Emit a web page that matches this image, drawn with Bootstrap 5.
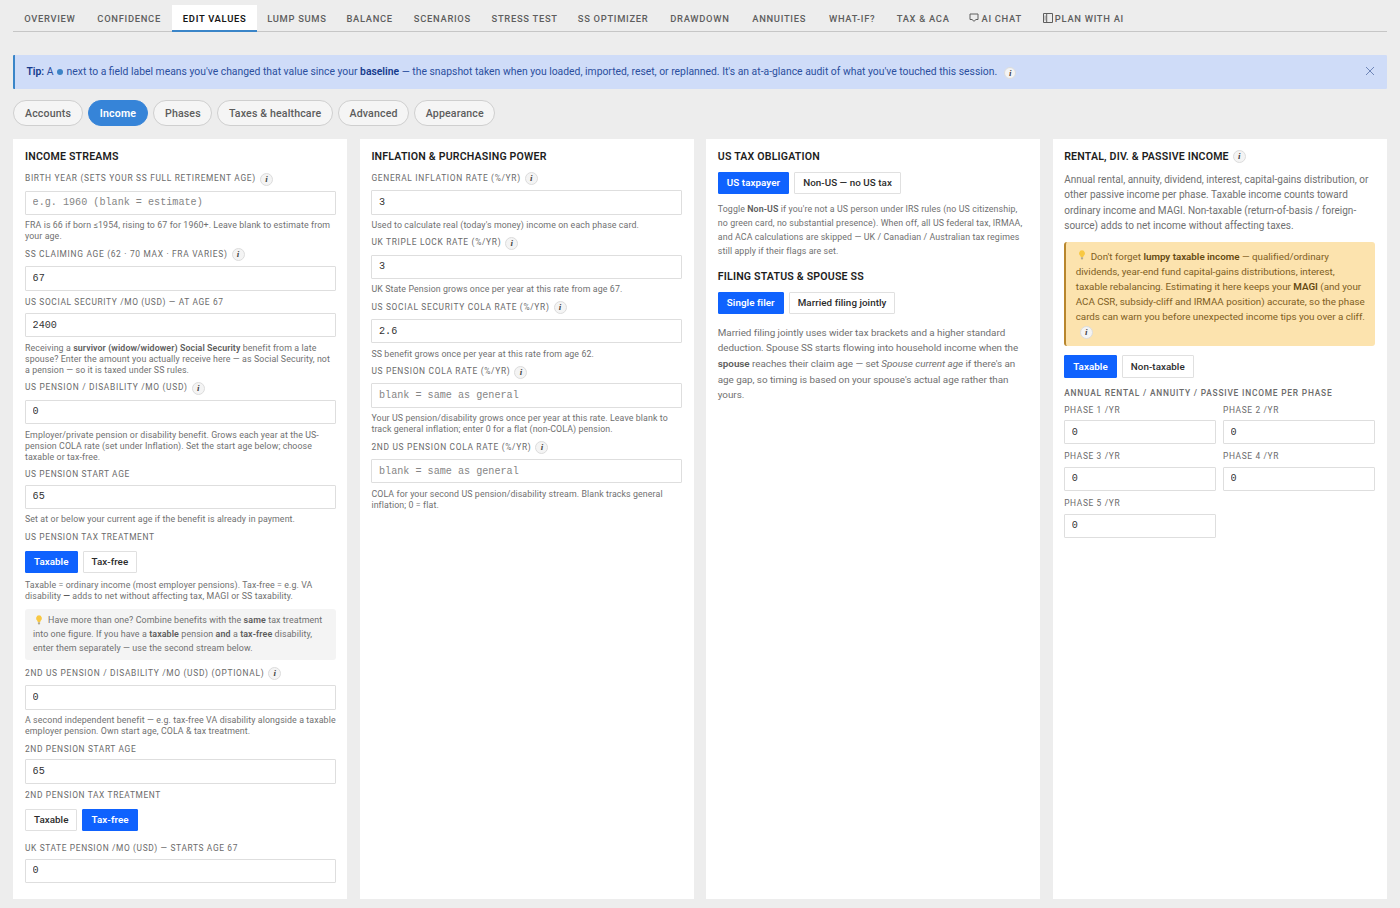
<!DOCTYPE html>
<html lang="en">
<head>
<meta charset="utf-8">
<meta name="viewport" content="width=device-width, initial-scale=1">
<title>Retirement planner – Edit values</title>
<link rel="stylesheet" href="https://cdn.jsdelivr.net/npm/bootstrap@5.3.0/dist/css/bootstrap.min.css">
<style>
  body { background: #ededed; color: #707070; font-family: Roboto, "Liberation Sans", sans-serif; font-size: 10.5px; line-height: 1.4; height: 908px; overflow: hidden; }
  b { font-weight: 600; color: #5c5c5c; }
  .page { padding: 5px 13.4px 0; }
  .tabs { display: grid; grid-template-columns: 73px 85.5px 85.5px 79px 66.5px 79px 85.5px 91.5px 82px 76.5px 69.5px 72.5px 72.5px 103px; height: 27px; border-bottom: 1px solid #c6c6c6; }
  .tabs .nav-link { padding: 1px 0 0; height: 27px; display: flex; align-items: center; justify-content: center; white-space: nowrap; color: #5e5e5e; font-size: 9.4px; font-weight: 500; letter-spacing: .7px; }
  .tabs .nav-link.active { background: #fff; color: #161616; font-weight: 600; border-bottom: 2px solid #3a85c8; padding-top: 3px; }
  .tabs svg { margin-right: 2px; margin-top: -3px; }
  .tip { height: 34px; margin-top: 23px; background: #cfdcf8; border-left: 2.5px solid #3a85c8; border-radius: 1px; color: #2b4f9e; padding: 1px 12px 0 11px; font-size: 10.36px; letter-spacing: 0; white-space: nowrap; }
  .tip b { color: #153a8c; }
  .tip .info { margin-left: 7px; width: 12px; height: 12px; line-height: 10px; }
  .dot { width: 6px; height: 6px; border-radius: 50%; background: #3d84c6; display: inline-block; margin: 0 1px; }
  .info { width: 13px; height: 13px; border-radius: 50%; border: 1px solid #dcdcdc; background: #f4f4f4; color: #444; font: italic bold 9px/11px "Liberation Serif", serif; text-align: center; letter-spacing: 0; display: inline-block; flex: none; margin-left: 4px; }
  .pills { gap: 5px; margin-top: 11px; }
  .pills .btn { height: 26px; padding: 0 10.6px; border-radius: 13px; border: 1px solid #cfcfcf; background: #f5f5f5; color: #5c5c5c; font-size: 10.6px; font-weight: 500; letter-spacing: .14px; line-height: 25px; }
  .pills .btn.active { background: #3684d8; border-color: #3684d8; color: #fff; font-weight: 600; padding: 0 11.3px; }
  .cols { display: grid; grid-template-columns: repeat(4, 334px); justify-content: space-between; margin-top: 13px; height: 760px; }
  .panel { background: #fff; padding: 10.6px 11.6px 0; white-space: nowrap; }
  .panel h2 { font-size: 10.6px; line-height: 14px; margin: 0; font-weight: 600; color: #1d1d1d; letter-spacing: .18px; display: flex; align-items: center; }
  .lbl { height: 22px; padding-top: 3px; display: flex; align-items: center; font-size: 8.4px; letter-spacing: .63px; color: #6b6b6b; }
  .lbl.tall { height: 24px; padding-top: .9px; letter-spacing: .69px; }
  .lbl.first { margin-top: 3px; }
  .rates .lbl.tall { height: 23.6px; }
  .lbl.heading { height: 20.2px; padding-top: 12.500px; font-weight: 500; letter-spacing: .79px; }
  .field.form-control { height: 24.4px; padding: 0 6.6px; border: 1px solid #dedede; border-radius: 1px; font-family: "Liberation Mono", monospace; font-size: 10.15px; color: #333; line-height: 22px; }
  .field::placeholder { color: #858585; opacity: 1; }
  .help { margin: 5.4px 0 0; font-size: 8.8px; line-height: 11.05px; letter-spacing: .11px; position: relative; }
  .help.loose { line-height: 14px; margin-top: 8px; }
  .choices { gap: 5px; margin-top: 8px; }
  .choices .btn { height: 22.4px; padding: 0 8px; border: 1px solid #e0e0e0; border-radius: 1px; background: #fff; color: #2b2b2b; font-size: 9.8px; font-weight: 500; line-height: 20px; letter-spacing: .06px; }
  .choices .btn.active { background: #0f62fe; border-color: #0f62fe; color: #fff; font-weight: 600; }
  .lbl + .choices { margin-top: 3px; }
  .choices + .help { margin-top: 7.4px; }
  .choices + .help.loose { margin-top: 7.600px; }
  .choices + .lbl { margin-top: 5.7px; }
  .choices + .lbl.heading { margin-top: 0; }
  .note { background: #f4f4f4; border-radius: 3px; padding: 5px 8px; font-size: 8.9px; line-height: 13.7px; letter-spacing: .1px; height: 50.6px; margin: 7px 0 1.4px; }
  .para { margin: 0; font-size: 10px; line-height: 15.6px; letter-spacing: .02px; }
  .filing .para { font-size: 9.85px; letter-spacing: -.03px; margin-top: -1.200px; }
  .warn { background: #fce3ae; border-left: 2px solid #b8862d; border-radius: 3px; color: #80601f; font-size: 9.8px; line-height: 15.1px; letter-spacing: -.01px; padding: 6.600px 9.5px; height: 104px; margin: 8px 0 9.4px; }
  .warn b { color: #664a12; }
  .bulb { margin: -3px 5px 0 2px; }
  .phases { display: grid; grid-template-columns: 152px 152px; justify-content: space-between; row-gap: .4px; }
</style>
</head>
<body>
<svg width="0" height="0" class="position-absolute" aria-hidden="true">
  <symbol id="bulb" viewBox="0 0 8 10"><path d="M4 .3a3 3 0 0 1 1.7 5.4L5.2 7H2.8L2.3 5.700A3 3 0 0 1 4 .3z" fill="#f8c843"/><path d="M2.900 7.300h2.200v1.500L4.500 9.600h-1l-.6-.8z" fill="#b5aa8c"/></symbol>
</svg>
<div class="page">
  <nav class="tabs nav">
    <a class="nav-link">OVERVIEW</a><a class="nav-link">CONFIDENCE</a><a class="nav-link active">EDIT VALUES</a><a class="nav-link">LUMP SUMS</a><a class="nav-link">BALANCE</a><a class="nav-link">SCENARIOS</a><a class="nav-link">STRESS TEST</a><a class="nav-link">SS OPTIMIZER</a><a class="nav-link">DRAWDOWN</a><a class="nav-link">ANNUITIES</a><a class="nav-link">WHAT-IF?</a><a class="nav-link">TAX &amp; ACA</a>
    <a class="nav-link"><svg width="10" height="10" viewBox="0 0 10 10" fill="none" stroke="#5e5e5e"><path d="M1 1h8v5.500H7L5 8.300 3 6.500H1z"/></svg>AI CHAT</a>
    <a class="nav-link"><svg width="10" height="10" viewBox="0 0 10 10" fill="none" stroke="#5e5e5e"><path d="M.5.5h9v9h-9zM3.700.5v9"/><path d="M2.100 2.500v5" stroke-width=".6"/></svg>PLAN WITH AI</a>
  </nav>
  <div class="tip d-flex align-items-center">
    <div class="flex-grow-1 d-flex align-items-center"><span><b>Tip:</b> A <i class="dot"></i> next to a field label means you've changed that value since your <b>baseline</b> — the snapshot taken when you loaded, imported, reset, or replanned. It's an at-a-glance audit of what you've touched this session.</span><span class="info">i</span></div>
    <svg width="10" height="10" viewBox="0 0 10 10" stroke="#6f86b8" fill="none" class="mb-1"><path d="M1 1l8 8M9 1L1 9"/></svg>
  </div>
  <div class="pills d-flex">
    <button class="btn">Accounts</button><button class="btn active">Income</button><button class="btn">Phases</button><button class="btn">Taxes &amp; healthcare</button><button class="btn">Advanced</button><button class="btn">Appearance</button>
  </div>
  <main class="cols">
    <section class="panel">
      <h2>INCOME STREAMS</h2>
      <label class="lbl tall first">BIRTH YEAR (SETS YOUR SS FULL RETIREMENT AGE)<span class="info">i</span></label>
      <input class="field form-control" placeholder="e.g. 1960 (blank = estimate)">
      <p class="help">FRA is 66 if born ≤1954, rising to 67 for 1960+. Leave blank to estimate from<br>your age.</p>
      <label class="lbl tall">SS CLAIMING AGE (62 · 70 MAX · FRA VARIES)<span class="info">i</span></label>
      <input class="field form-control" value="67">
      <label class="lbl">US SOCIAL SECURITY /MO (USD) — AT AGE 67</label>
      <input class="field form-control" value="2400">
      <p class="help">Receiving a <b>survivor (widow/widower) Social Security</b> benefit from a late<br>spouse? Enter the amount you actually receive here — as Social Security, not<br>a pension — so it is taxed under SS rules.</p>
      <label class="lbl tall">US PENSION / DISABILITY /MO (USD)<span class="info">i</span></label>
      <input class="field form-control" value="0">
      <p class="help">Employer/private pension or disability benefit. Grows each year at the US-<br>pension COLA rate (set under Inflation). Set the start age below; choose<br>taxable or tax-free.</p>
      <label class="lbl">US PENSION START AGE</label>
      <input class="field form-control" value="65">
      <p class="help">Set at or below your current age if the benefit is already in payment.</p>
      <label class="lbl">US PENSION TAX TREATMENT</label>
      <div class="choices d-flex"><button class="btn active">Taxable</button><button class="btn">Tax-free</button></div>
      <p class="help">Taxable = ordinary income (most employer pensions). Tax-free = e.g. VA<br>disability <b>—</b> adds to net without affecting tax, MAGI or SS taxability.</p>
      <div class="note"><svg class="bulb" width="8" height="10"><use href="#bulb"/></svg>Have more than one? Combine benefits with the <b>same</b> tax treatment<br>into one figure. If you have a <b>taxable</b> pension <b>and</b> a <b>tax-free</b> disability,<br>enter them separately — use the second stream below.</div>
      <label class="lbl tall">2ND US PENSION / DISABILITY /MO (USD) (OPTIONAL)<span class="info">i</span></label>
      <input class="field form-control" value="0">
      <p class="help">A second independent benefit — e.g. tax-free VA disability alongside a taxable<br>employer pension. Own start age, COLA &amp; tax treatment.</p>
      <label class="lbl">2ND PENSION START AGE</label>
      <input class="field form-control" value="65">
      <label class="lbl">2ND PENSION TAX TREATMENT</label>
      <div class="choices d-flex"><button class="btn">Taxable</button><button class="btn active">Tax-free</button></div>
      <label class="lbl">UK STATE PENSION /MO (USD) — STARTS AGE 67</label>
      <input class="field form-control" value="0">
    </section>
    <section class="panel rates">
      <h2>INFLATION &amp; PURCHASING POWER</h2>
      <label class="lbl tall first">GENERAL INFLATION RATE (%/YR)<span class="info">i</span></label>
      <input class="field form-control" value="3">
      <p class="help">Used to calculate real (today's money) income on each phase card.</p>
      <label class="lbl tall">UK TRIPLE LOCK RATE (%/YR)<span class="info">i</span></label>
      <input class="field form-control" value="3">
      <p class="help">UK State Pension grows once per year at this rate from age 67.</p>
      <label class="lbl tall">US SOCIAL SECURITY COLA RATE (%/YR)<span class="info">i</span></label>
      <input class="field form-control" value="2.6">
      <p class="help">SS benefit grows once per year at this rate from age 62.</p>
      <label class="lbl tall">US PENSION COLA RATE (%/YR)<span class="info">i</span></label>
      <input class="field form-control" placeholder="blank = same as general">
      <p class="help">Your US pension/disability grows once per year at this rate. Leave blank to<br>track general inflation; enter 0 for a flat (non-COLA) pension.</p>
      <label class="lbl tall">2ND US PENSION COLA RATE (%/YR)<span class="info">i</span></label>
      <input class="field form-control" placeholder="blank = same as general">
      <p class="help">COLA for your second US pension/disability stream. Blank tracks general<br>inflation; 0 = flat.</p>
    </section>
    <section class="panel filing">
      <h2>US TAX OBLIGATION</h2>
      <div class="choices d-flex"><button class="btn active">US taxpayer</button><button class="btn">Non-US — no US tax</button></div>
      <p class="help loose">Toggle <b>Non-US</b> if you're not a US person under IRS rules (no US citizenship,<br>no green card, no substantial presence). When off, all US federal tax, IRMAA,<br>and ACA calculations are skipped — UK / Canadian / Australian tax regimes<br>still apply if their flags are set.</p>
      <h2 class="pt-2 mt-1">FILING STATUS &amp; SPOUSE SS</h2>
      <div class="choices d-flex mb-2"><button class="btn active">Single filer</button><button class="btn">Married filing jointly</button></div>
      <p class="para pt-1">Married filing jointly uses wider tax brackets and a higher standard<br>deduction. Spouse SS starts flowing into household income when the<br><b>spouse</b> reaches their claim age — set <i>Spouse current age</i> if there's an<br>age gap, so timing is based on your spouse's actual age rather than<br>yours.</p>
    </section>
    <section class="panel">
      <h2>RENTAL, DIV. &amp; PASSIVE INCOME<span class="info">i</span></h2>
      <p class="para pt-2">Annual rental, annuity, dividend, interest, capital-gains distribution, or<br>other passive income per phase. Taxable income counts toward<br>ordinary income and MAGI. Non-taxable (return-of-basis / foreign-<br>source) adds to net income without affecting taxes.</p>
      <div class="warn"><svg class="bulb" width="8" height="10"><use href="#bulb"/></svg>Don't forget <b>lumpy taxable income</b> — qualified/ordinary<br>dividends, year-end fund capital-gains distributions, interest,<br>taxable rebalancing. Estimating it here keeps your <b>MAGI</b> (and your<br>ACA CSR, subsidy-cliff and IRMAA position) accurate, so the phase<br>cards can warn you before unexpected income tips you over a cliff.<br><i class="info">i</i></div>
      <div class="choices d-flex"><button class="btn active">Taxable</button><button class="btn">Non-taxable</button></div>
      <div class="lbl heading">ANNUAL RENTAL / ANNUITY / PASSIVE INCOME PER PHASE</div>
      <div class="phases">
        <div><label class="lbl">PHASE 1 /YR</label><input class="field form-control" value="0"></div>
        <div><label class="lbl">PHASE 2 /YR</label><input class="field form-control" value="0"></div>
        <div><label class="lbl">PHASE 3 /YR</label><input class="field form-control" value="0"></div>
        <div><label class="lbl">PHASE 4 /YR</label><input class="field form-control" value="0"></div>
        <div><label class="lbl">PHASE 5 /YR</label><input class="field form-control" value="0"></div>
      </div>
    </section>
  </main>
</div>
<script src="https://cdn.jsdelivr.net/npm/bootstrap@5.3.0/dist/js/bootstrap.bundle.min.js"></script>
</body>
</html>
